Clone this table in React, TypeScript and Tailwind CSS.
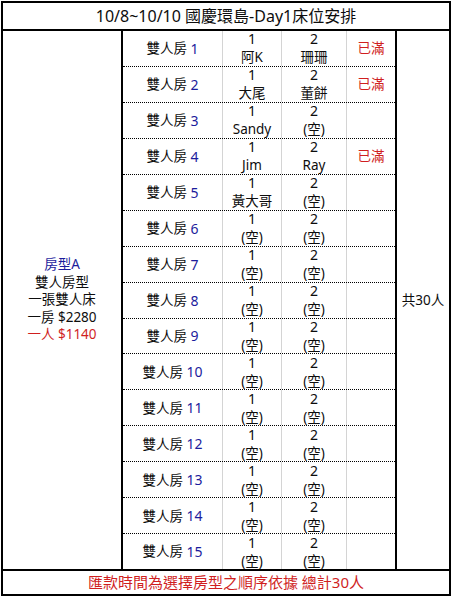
const rooms = [
  { no: 1, a: "阿K", b: "珊珊", full: true },
  { no: 2, a: "大尾", b: "董餅", full: true },
  { no: 3, a: "Sandy", b: "(空)", full: false },
  { no: 4, a: "Jim", b: "Ray", full: true },
  { no: 5, a: "黃大哥", b: "(空)", full: false },
  { no: 6, a: "(空)", b: "(空)", full: false },
  { no: 7, a: "(空)", b: "(空)", full: false },
  { no: 8, a: "(空)", b: "(空)", full: false },
  { no: 9, a: "(空)", b: "(空)", full: false },
  { no: 10, a: "(空)", b: "(空)", full: false },
  { no: 11, a: "(空)", b: "(空)", full: false },
  { no: 12, a: "(空)", b: "(空)", full: false },
  { no: 13, a: "(空)", b: "(空)", full: false },
  { no: 14, a: "(空)", b: "(空)", full: false },
  { no: 15, a: "(空)", b: "(空)", full: false },
];

const font = {
  fontFamily: '"Noto Sans", "Noto Sans CJK TC", sans-serif',
};

const App = () => {
  const renderedRooms = rooms.map((room, i) => (
    <div
      key={room.no}
      className={`flex flex-1 min-h-0 ${
        i < rooms.length - 1 ? "border-b border-dotted border-black" : ""
      }`}
    >
      <div className="w-[99px] flex items-center justify-center">
        雙人房&nbsp;<span className="text-[#1c1c9c] text-[14px]">{room.no}</span>
      </div>
      <div className="w-[59px] border-l border-[#d4d4d4] flex flex-col items-center justify-center leading-[18px]">
        <span className="text-[14px]">1</span>
        <span>{room.a}</span>
      </div>
      <div className="w-[65px] border-l border-[#d4d4d4] flex flex-col items-center justify-center leading-[18px]">
        <span className="text-[14px]">2</span>
        <span>{room.b}</span>
      </div>
      <div className="w-[49px] border-l border-[#d4d4d4] flex items-center justify-center text-[#d01f1f]">
        {room.full ? "已滿" : ""}
      </div>
    </div>
  ));

  return (
    <div className="w-[452px] h-[599px] bg-white pt-[1px] pl-[1px]" style={font}>
      <div className="w-[450px] border-2 border-black flex flex-col text-[#0d0d0d] text-[13.5px]">
        <div className="h-[28px] border-b-2 border-black flex items-center justify-center text-[16px]">
          10/8~10/10 國慶環島-Day1床位安排
        </div>

        <div className="h-[538px] flex">
          <div className="w-[118px] flex flex-col items-center justify-center leading-[17.5px] text-[13.5px]">
            <span className="text-[#1c1c9c]">房型A</span>
            <span>雙人房型</span>
            <span>一張雙人床</span>
            <span>一房 $2280</span>
            <span className="text-[#d01f1f]">一人 $1140</span>
          </div>
          <div className="w-[276px] border-x-2 border-black flex flex-col">
            {renderedRooms}
          </div>
          <div className="flex-1 flex items-center justify-center">共30人</div>
        </div>

        <div className="h-[25px] border-t-2 border-black flex items-center justify-center text-[15px] text-[#d01f1f]">
          匯款時間為選擇房型之順序依據 總計30人
        </div>
      </div>
    </div>
  );
};

export default App;
